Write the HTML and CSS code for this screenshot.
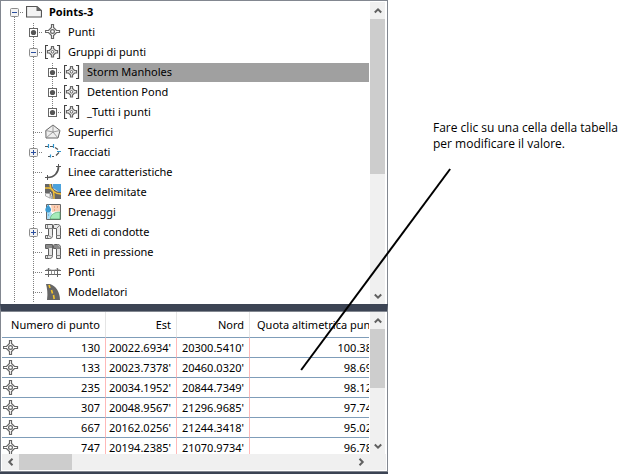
FILE: index.html
```
<!DOCTYPE html>
<html lang="it">
<head>
    <meta charset="UTF-8">
    <meta name="viewport" content="width=device-width, initial-scale=1.0">
    <title>Points-3</title>
    <link rel="stylesheet" href="styles.css">
</head>
<body>
    <!-- Simboli delle icone -->
    <svg class="symbols" aria-hidden="true">
        <symbol id="minus" viewBox="0 0 9 9">
            <rect x=".5" y=".5" width="8" height="8" rx="1" fill="#f4f4f4" stroke="#8c8c8c"/>
            <path d="M2 4.5h5" stroke="#2c4f9e"/>
        </symbol>
        <symbol id="plus" viewBox="0 0 9 9">
            <rect x=".5" y=".5" width="8" height="8" rx="1" fill="#f4f4f4" stroke="#8c8c8c"/>
            <path d="M2 4.5h5M4.5 2v5" stroke="#2c4f9e"/>
        </symbol>
        <symbol id="dot" viewBox="0 0 9 9">
            <rect x=".5" y=".5" width="8" height="8" fill="#fff" stroke="#666"/>
            <circle cx="4.5" cy="4.5" r="2.6" fill="#555"/>
        </symbol>
        <symbol id="drawing" viewBox="0 0 16 16">
            <path d="M.5 2.500h10.500l4.500 4v6.500H.5z" fill="#f3f3f3" stroke="#555" stroke-width="1.200"/>
            <path d="M10.500 2v5H16z" fill="#666"/>
        </symbol>
        <symbol id="point" viewBox="0 0 16 16">
            <path d="M6.500.5h2v3l3 3h3v2h-3l-3 3v3h-2v-3l-3-3h-3v-2h3l3-3z" fill="#fff" stroke="#666" stroke-width="1.200"/>
            <circle cx="7.500" cy="7.500" r="1.900" fill="#fff" stroke="#666" stroke-width="1.200"/>
        </symbol>
        <symbol id="group" viewBox="0 0 16 16">
            <path d="M3 1.500H.5v13H3M12 1.500h2.500v13H12" fill="none" stroke="#444" stroke-width="1.200"/>
            <path d="M6.500 2.500h2v2l2 2h2v2.500h-2l-2 2v2h-2v-2l-2-2h-2V6.500h2l2-2z" fill="#eee" stroke="#666" stroke-width="1.200"/>
            <circle cx="7.500" cy="7.800" r="1.300" fill="#fff" stroke="#666"/>
        </symbol>
        <symbol id="surface" viewBox="0 0 16 16">
            <path d="M8 1l7 5.500-2 7.500H1L.8 6.500z" fill="#eee" stroke="#666"/>
            <path d="M8 1v7L.8 6.500M8 8l7-1.500M8 8l5 6M8 8l-7 6" fill="none" stroke="#888" stroke-width=".8"/>
        </symbol>
        <symbol id="alignment" viewBox="0 0 16 16">
            <path d="M0 2.500h3M5 2.500h3M10 3.500l3 2M14 8.500l-3 3M9 12.500H7M5 12.500H3" fill="none" stroke="#555" stroke-width="1.200"/>
            <path d="M3.500 0v4M8.500 0v4M12 7.500h4M5.500 10.500v3" stroke="#2b94cf" stroke-width="1.200"/>
        </symbol>
        <symbol id="feature" viewBox="0 0 16 16">
            <path d="M13.500 2.500c0 6-4 11-11 11" fill="none" stroke="#555" stroke-width="1.700"/>
            <path d="M11 2.500h5M13.500 0v3M2.500 11v5M0 13.500h3" stroke="#555"/>
        </symbol>
        <symbol id="site" viewBox="0 0 16 16">
            <path d="M0 0h16v15H5l-5-5z" fill="#ddd"/>
            <path d="M8 0h8v8c-3 0-4-2-8-4z" fill="#4da3dc"/>
            <path d="M0 0h7c0 5 4 8 9 8v7h-4H6C6 10 5 9 0 9z" fill="#666"/>
            <path d="M0 4h4c5 1 5 4 5 11M5 0c0 6 5 10 11 10" fill="none" stroke="#f3c137" stroke-width="1.400"/>
            <path d="M.5 9.500h4.500v4.500l-4.500-2z" fill="#f4f4f4" stroke="#999" stroke-width=".8"/>
            <path d="M7 15c0-4-1-6-2-7" fill="none" stroke="#eee"/>
        </symbol>
        <symbol id="catchment" viewBox="0 0 16 16">
            <path d="M1.500.5h14v15h-14z" fill="#fff" stroke="#666"/>
            <path d="M6 1h9v6c-3 0-6 1-8 1z" fill="#f9cfb5"/>
            <path d="M2 8h4l1 2-3 5H2z" fill="#a9dcf5"/>
            <path d="M5 15c1-5 5-7 10-7v7z" fill="#a5ebba" stroke="#52a56b" stroke-width=".7"/>
            <path d="M3.200 0C2 3 .3 4 .3 5.600a2.900 2.900 0 0 0 5.800 0C6.100 4 4.400 3 3.200 0z" fill="#3c9bd3"/>
            <path d="M9 6h1M12 3h1M9 3h1" stroke="#d47b55"/>
            <path d="M3 11h1" stroke="#3c9bd3"/>
        </symbol>
        <symbol id="pipes" viewBox="0 0 16 16">
            <path d="M.5.5h7v11c0 2-1 3-3 3h-4v-3h3v-7h-3zM8.500 1.500c0-.6.4-1 1-1h3c2 0 3 1 3 3v11h-4V4.500h-3z" fill="#e9e9e9" stroke="#606060"/>
            <path d="M3.500 4.500h4M11.500 11.500h4M3.500 11.500l3 2M11.500 4.500l3-3M2.500 1v3M2.500 12v2" stroke="#888"/>
        </symbol>
        <symbol id="pressure" viewBox="0 0 16 16">
            <path d="M.5.5h7v11c0 2-1 3-3 3h-4v-3h3v-7h-3zM8.500 1.500c0-.6.4-1 1-1h3c2 0 3 1 3 3v11h-4V4.500h-3z" fill="#e2e2e2" stroke="#606060"/>
            <path d="M1 1h6v3H1zM9 1h4l2 2v2h-3V4H9z" fill="#8a8a8a"/>
            <path d="M3.500 11.500h4M11.500 11.500h4M2.500 12v2" stroke="#888"/>
        </symbol>
        <symbol id="bridge" viewBox="0 0 16 16">
            <path d="M0 6.500h16M0 10.500h16M3.500 4v9M12.500 4v9" stroke="#666"/>
            <path d="M6.500 6v5M9.500 6v5M1 6c2 0 2-1 2.500-2 1 3 8 3 9 0 .5 1 .5 2 2.500 2" fill="none" stroke="#777" stroke-width=".8"/>
        </symbol>
        <symbol id="corridor" viewBox="0 0 16 16">
            <path d="M1 0h4c6 2 10 8 10 16H2C3 9 2 4 1 0z" fill="#666"/>
            <path d="M4 1l1 3M6.500 6l1 3.500M8.500 11l.7 4" stroke="#f4c42c" stroke-width="1.600"/>
        </symbol>
        <symbol id="up" viewBox="0 0 8 8"><path d="M.8 5.500L4 2.300l3.200 3.200" fill="none" stroke="#606060" stroke-width="2"/></symbol>
        <symbol id="down" viewBox="0 0 8 8"><path d="M.8 2.500L4 5.700l3.200-3.200" fill="none" stroke="#606060" stroke-width="2"/></symbol>
        <symbol id="left" viewBox="0 0 8 8"><path d="M5.500.8L2.300 4l3.200 3.200" fill="none" stroke="#606060" stroke-width="2"/></symbol>
        <symbol id="right" viewBox="0 0 8 8"><path d="M2.500.8L5.700 4 2.500 7.200" fill="none" stroke="#606060" stroke-width="2"/></symbol>
    </svg>

    <main class="figure">
        <section class="palette">
            <!-- Albero degli oggetti -->
            <div class="tree-pane">
                <ul class="tree">
                    <li class="root">
                        <div class="row"><button class="toggle" aria-label="Comprimi"><svg><use href="#minus"/></svg></button><svg class="icon"><use href="#drawing"/></svg><span class="label bold">Points-3</span></div>
                        <ul class="branch">
                            <li><div class="row"><button class="toggle" aria-label="Punti"><svg><use href="#dot"/></svg></button><svg class="icon"><use href="#point"/></svg><span class="label">Punti</span></div></li>
                            <li>
                                <div class="row"><button class="toggle" aria-label="Comprimi"><svg><use href="#minus"/></svg></button><svg class="icon"><use href="#group"/></svg><span class="label">Gruppi di punti</span></div>
                                <ul class="branch last">
                                    <li><div class="row"><button class="toggle" aria-label="Storm Manholes"><svg><use href="#dot"/></svg></button><svg class="icon"><use href="#group"/></svg><span class="label selected">Storm Manholes</span></div></li>
                                    <li><div class="row"><button class="toggle" aria-label="Detention Pond"><svg><use href="#dot"/></svg></button><svg class="icon"><use href="#group"/></svg><span class="label">Detention Pond</span></div></li>
                                    <li><div class="row"><button class="toggle" aria-label="Tutti i punti"><svg><use href="#dot"/></svg></button><svg class="icon"><use href="#group"/></svg><span class="label">_Tutti i punti</span></div></li>
                                </ul>
                            </li>
                            <li><div class="row leaf"><svg class="icon"><use href="#surface"/></svg><span class="label">Superfici</span></div></li>
                            <li><div class="row"><button class="toggle" aria-label="Espandi"><svg><use href="#plus"/></svg></button><svg class="icon"><use href="#alignment"/></svg><span class="label">Tracciati</span></div></li>
                            <li><div class="row leaf"><svg class="icon"><use href="#feature"/></svg><span class="label">Linee caratteristiche</span></div></li>
                            <li><div class="row leaf"><svg class="icon"><use href="#site"/></svg><span class="label">Aree delimitate</span></div></li>
                            <li><div class="row leaf"><svg class="icon"><use href="#catchment"/></svg><span class="label">Drenaggi</span></div></li>
                            <li><div class="row"><button class="toggle" aria-label="Espandi"><svg><use href="#plus"/></svg></button><svg class="icon"><use href="#pipes"/></svg><span class="label">Reti di condotte</span></div></li>
                            <li><div class="row leaf"><svg class="icon"><use href="#pressure"/></svg><span class="label">Reti in pressione</span></div></li>
                            <li><div class="row leaf"><svg class="icon"><use href="#bridge"/></svg><span class="label">Ponti</span></div></li>
                            <li><div class="row leaf"><svg class="icon"><use href="#corridor"/></svg><span class="label">Modellatori</span></div></li>
                        </ul>
                    </li>
                </ul>
                <div class="scroll vertical">
                    <button aria-label="Su"><svg><use href="#up"/></svg></button>
                    <div class="track"><div class="thumb tree-thumb"></div></div>
                    <button aria-label="Giù"><svg><use href="#down"/></svg></button>
                </div>
            </div>

            <!-- Tabella dei punti -->
            <div class="table-pane">
                <div class="table-area">
                    <div class="table-view">
                        <table>
                            <colgroup><col class="col-number"><col class="col-east"><col class="col-north"><col class="col-elevation"></colgroup>
                            <thead>
                                <tr><th>Numero di punto</th><th>Est</th><th>Nord</th><th class="elevation">Quota altimetrica punto</th></tr>
                            </thead>
                            <tbody>
                                <tr><td><div class="number"><svg class="icon"><use href="#point"/></svg>130</div></td><td>20022.6934'</td><td>20300.5410'</td><td>100.3800'</td></tr>
                                <tr><td><div class="number"><svg class="icon"><use href="#point"/></svg>133</div></td><td>20023.7378'</td><td>20460.0320'</td><td>98.6900'</td></tr>
                                <tr><td><div class="number"><svg class="icon"><use href="#point"/></svg>235</div></td><td>20034.1952'</td><td>20844.7349'</td><td>98.1200'</td></tr>
                                <tr><td><div class="number"><svg class="icon"><use href="#point"/></svg>307</div></td><td>20048.9567'</td><td>21296.9685'</td><td>97.7400'</td></tr>
                                <tr><td><div class="number"><svg class="icon"><use href="#point"/></svg>667</div></td><td>20162.0256'</td><td>21244.3418'</td><td>95.0200'</td></tr>
                                <tr><td><div class="number"><svg class="icon"><use href="#point"/></svg>747</div></td><td>20194.2385'</td><td>21070.9734'</td><td>96.7800'</td></tr>
                            </tbody>
                        </table>
                    </div>
                    <div class="scroll vertical">
                        <button aria-label="Su"><svg><use href="#up"/></svg></button>
                        <div class="track"><div class="thumb table-thumb"></div></div>
                        <button aria-label="Giù"><svg><use href="#down"/></svg></button>
                    </div>
                </div>
                <div class="scroll horizontal">
                    <button aria-label="Sinistra"><svg><use href="#left"/></svg></button>
                    <div class="track"><div class="thumb"></div></div>
                    <button aria-label="Destra"><svg><use href="#right"/></svg></button>
                </div>
            </div>
        </section>

        <p class="note">Fare clic su una cella della tabella per modificare il valore.</p>

        <!-- Linea di richiamo dalla nota alla cella -->
        <svg class="leader" aria-hidden="true">
            <line x1="71%" y1="169" x2="47.5%" y2="370"/>
        </svg>
    </main>
</body>
</html>
```
FILE: styles.css
```
body {
    margin: 0;
    background: #fff;
    color: #000;
    font-family: "Noto Sans", "Open Sans", sans-serif;
    font-size: 11px;
}

.symbols {
    display: none;
}

svg {
    display: block;
}

ul {
    margin: 0;
    padding: 0;
    list-style: none;
}

button {
    display: flex;
    align-items: center;
    justify-content: center;
    padding: 0;
    border: none;
    background: none;
}

.figure {
    position: relative;
    display: flex;
    align-items: flex-start;
}

.palette {
    box-sizing: border-box;
    width: 61.2%;
    border-bottom: 2px solid #3c4454;
}

/* Albero */
.tree-pane {
    display: flex;
    border: 1px solid #828790;
    border-bottom: none;
    padding: 1px 2px 0 0;
}

.tree {
    flex: 1;
    min-width: 0;
    padding: 1px 0;
}

/* linee guida punteggiate */
.root,
.branch {
    background: repeating-linear-gradient(#808080 0 1px, transparent 1px 2px) 13px 0 / 1px 100% no-repeat;
}

.root {
    background-position: 13px 10px;
}

.branch {
    margin-left: 19px;
}

.branch.last {
    background-size: 1px calc(100% - 10px);
}

.row {
    display: flex;
    align-items: center;
    height: 20px;
    padding-left: 9px;
    background: repeating-linear-gradient(90deg, #808080 0 1px, transparent 1px 2px) 13px 9px / 9px 1px no-repeat;
}

.row.leaf {
    padding-left: 25px;
}

.toggle {
    width: 9px;
    height: 9px;
    margin: 0 7px 1px 0;
}

.toggle svg {
    width: 9px;
    height: 9px;
}

.icon {
    flex: none;
    width: 16px;
    height: 16px;
}

.row .icon {
    margin-bottom: 2px;
}

.label {
    flex: 1;
    margin: 0 1px 1px 3px;
    padding: 0 0 2px 4px;
    line-height: 17px;
    white-space: nowrap;
}

.bold {
    font-weight: bold;
}

.selected {
    background: #a0a0a0;
}

/* Barre di scorrimento */
.scroll {
    display: flex;
    background: #f0f0f0;
}

.scroll svg {
    width: 8px;
    height: 8px;
}

.track {
    flex: 1;
}

.thumb {
    background: #cdcdcd;
}

.vertical {
    flex: none;
    flex-direction: column;
    width: 15px;
}

.vertical button {
    width: 15px;
    height: 17px;
}

.tree-thumb {
    height: 58%;
}

.table-thumb {
    height: 55%;
}

.horizontal {
    height: 16px;
    padding-right: 17px;
}

.horizontal button {
    width: 17px;
    height: 16px;
}

.horizontal .thumb {
    width: 16%;
    height: 100%;
}

/* Tabella */
.table-pane {
    border: 1px solid #828790;
    border-top: 7px solid #3c4454;
    padding: 1px;
    box-shadow: inset 0 1px #828790;
}

.table-area {
    display: flex;
    height: 142px;
    padding-right: 1px;
}

.table-view {
    flex: 1;
    min-width: 0;
    margin-right: 1px;
    overflow: hidden;
}

table {
    width: 391px;
    table-layout: fixed;
    border-collapse: separate;
    border-spacing: 0;
}

.col-number {
    width: 104px;
}

.col-east {
    width: 71px;
}

.col-north {
    width: 73px;
}

.col-elevation {
    width: 143px;
}

th,
td {
    padding: 0 5px 0 0;
    text-align: right;
    font-weight: normal;
    white-space: nowrap;
    border-bottom: 1px solid #7f9db9;
}

th {
    height: 25px;
    border-right: 1px solid #e5e5e5;
}

th.elevation {
    padding-left: 7px;
    text-align: left;
}

td {
    height: 19px;
    border-right: 1px solid #ffb9b9;
}

.number {
    display: flex;
    align-items: center;
    justify-content: space-between;
    line-height: 16px;
}

.number .icon {
    margin-left: 1px;
}

/* Nota */
.note {
    flex: 1;
    margin: 120px 8px 0 45px;
    font-family: "Open Sans", sans-serif;
    font-size: 12px;
    line-height: 16px;
}

.leader {
    position: absolute;
    top: 0;
    left: 0;
    width: 100%;
    height: 100%;
    pointer-events: none;
}

.leader line {
    stroke: #000;
    stroke-width: 2;
}
```
